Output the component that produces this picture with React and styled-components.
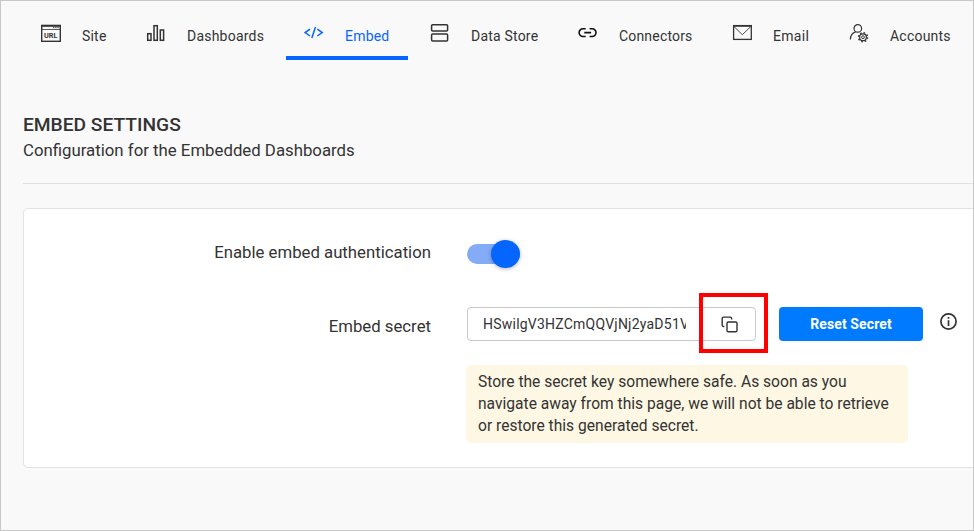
import React from "react";
import styled, { createGlobalStyle } from "styled-components";

const GlobalStyle = createGlobalStyle`
  *, *::before, *::after { box-sizing: border-box; }
  body { margin: 0; background: #f9f9f9; }
  button, input { font: inherit; }
`;

const Page = styled.div`
  height: 531px;
  overflow: hidden;
  border: 1px solid #c8c8c8;
  background: #f9f9f9;
  color: #333;
  font-family: Roboto, "Liberation Sans", sans-serif;
`;

const Nav = styled.nav`
  display: flex;
  gap: 4px;
  height: 59px;
  padding-left: 22px;
`;

const Tab = styled.a`
  display: flex;
  flex: none;
  gap: 21px;
  width: ${(p) => p.$width}px;
  padding-left: 18px;
  border-bottom: 4px solid ${(p) => (p.$active ? "#0565ff" : "transparent")};
  color: ${(p) => (p.$active ? "#0565ff" : "#333")};
  font-size: 14px;
  line-height: 16px;
  letter-spacing: ${(p) => p.$spacing}px;
  white-space: nowrap;
`;

const TabIcon = styled.svg`
  flex: none;
  width: 20px;
  height: 20px;
  margin-top: 22px;
  overflow: visible;
  fill: none;
  stroke: currentColor;
  stroke-width: 1.5;
`;

const TabLabel = styled.span`
  padding-top: 27px;
`;

const Header = styled.header`
  height: 124px;
  margin-left: 22px;
  padding-top: 53px;
  border-bottom: 1px solid #e2e2e2;
`;

const Title = styled.h1`
  margin: 0;
  font-size: 19.2px;
  font-weight: 500;
  line-height: 24px;
`;

const Subtitle = styled.p`
  margin: 1px 0 0;
  font-size: 16.8px;
  line-height: 24px;
`;

const Card = styled.section`
  height: 260px;
  margin: 24px -8px 0 22px;
  border: 1px solid #e2e2e2;
  border-radius: 5px;
  background: #fff;
`;

const Row = styled.div`
  display: flex;
  height: ${(p) => p.$height}px;
  padding-top: ${(p) => p.$top}px;
`;

const Label = styled.label`
  flex: none;
  width: 407px;
  margin-right: 36px;
  padding-top: ${(p) => p.$top}px;
  font-size: 16.75px;
  line-height: 20px;
  text-align: right;
`;

const Switch = styled.button`
  display: flex;
  align-items: center;
  justify-content: flex-end;
  width: 53px;
  height: 20px;
  margin-top: 4px;
  padding: 0;
  border: 0;
  border-radius: 10px;
  background: #84acf6;
`;

const Knob = styled.span`
  flex: none;
  width: 29px;
  height: 28px;
  border-radius: 50%;
  background: #0565ff;
  box-shadow: 0 1px 4px rgba(0, 0, 0, 0.28);
`;

const SecretField = styled.div`
  position: relative;
  display: flex;
  flex: none;
  align-items: center;
  width: 289px;
  height: 34px;
  padding-left: 15px;
  border: 1px solid #c9c9c9;
  border-radius: 4px;
`;

const SecretInput = styled.input`
  width: 203px;
  padding: 0;
  border: 0;
  outline: 0;
  background: transparent;
  color: #333;
  font-size: 14px;
  letter-spacing: 0.23px;
`;

const CopyButton = styled.button`
  display: flex;
  margin-left: 35px;
  padding: 0;
  border: 0;
  background: transparent;
  color: #333;
`;

const Highlight = styled.div`
  position: absolute;
  top: -15px;
  right: -13px;
  width: 69px;
  height: 60px;
  border: 4px solid #f00;
  pointer-events: none;
`;

const ResetButton = styled.button`
  flex: none;
  width: 144px;
  height: 34px;
  margin: 0 17px 0 23px;
  padding: 0;
  border: 0;
  border-radius: 4px;
  background: #007bff;
  color: #fff;
  font-size: 14px;
  font-weight: 700;
  letter-spacing: 0.1px;
`;

const InfoIcon = styled.svg`
  flex: none;
  width: 17px;
  height: 17px;
  margin-top: 6px;
`;

const Notice = styled.p`
  width: 442px;
  height: 78px;
  margin: 0 0 0 442px;
  padding: 6px 0 0 12px;
  border-radius: 5px;
  background: #fdf7e3;
  font-size: 15.6px;
  line-height: 22px;
  white-space: pre-line;
`;

const UrlText = styled.text`
  fill: currentColor;
  stroke: none;
  font-size: 7.3px;
  font-weight: 700;
  letter-spacing: 0;
`;

const icons = {
  site: (
    <>
      <rect x="0.7" y="2.7" width="18.6" height="15.6" strokeWidth="1.4" />
      <path d="M0 2.7h20" strokeWidth="2" />
      <path d="M1 6.5h18" strokeWidth="0.8" />
      <path d="M12 4.7h6" strokeWidth="1" strokeDasharray="1.4 0.8" />
      <UrlText x="3" y="15">URL</UrlText>
    </>
  ),
  dashboards: (
    <>
      <rect x="1.7" y="10.7" width="3.3" height="6.6" />
      <rect x="8" y="2.7" width="3.3" height="14.6" />
      <rect x="14.3" y="7" width="3.3" height="10.3" />
    </>
  ),
  embed: (
    <path d="M6 6.2L1.1 9.6 6 13M13.3 6.2l4.9 3.4-4.9 3.4M11.5 4L7.8 15.1" strokeWidth="1.5" />
  ),
  store: (
    <>
      <rect x="1.6" y="1.7" width="16" height="6.4" rx="1" />
      <rect x="1.6" y="10.9" width="16" height="7" rx="1" />
    </>
  ),
  link: (
    <path
      d="M7.7 5.7H5a3.9 3.9 0 0 0 0 7.8h2.7M11.6 5.7h2.5a3.9 3.9 0 0 1 0 7.8h-2.5M6.3 9.6h6.8"
      stroke="#111"
      strokeWidth="1.6"
    />
  ),
  email: (
    <>
      <rect x="1.6" y="2.8" width="17.7" height="13.6" strokeWidth="1.3" />
      <path d="M1 2.8h19" strokeWidth="1.7" />
      <path d="M2 3.5l8.3 8.2L18.8 3.5" strokeWidth="0.9" />
    </>
  ),
  accounts: (
    <>
      <circle cx="8.8" cy="5.4" r="3.8" strokeWidth="1.2" />
      <path d="M1.4 16.6c0-3.9 2-6.7 5.2-7.7" strokeWidth="1.2" />
      <circle cx="14" cy="14.2" r="3.4" strokeWidth="1.2" />
      <circle cx="14" cy="14.2" r="1.4" strokeWidth="1" />
      <circle cx="14" cy="14.2" r="4.5" strokeWidth="1.5" strokeDasharray="1.65 1.88" />
    </>
  ),
};

const tabs = [
  { label: "Site", icon: "site", width: 101, spacing: 0.2 },
  { label: "Dashboards", icon: "dashboards", width: 154, spacing: 0.22 },
  { label: "Embed", icon: "embed", width: 122, spacing: 0.2 },
  { label: "Data Store", icon: "store", width: 144, spacing: 0.2 },
  { label: "Connectors", icon: "link", width: 150, spacing: 0.18 },
  { label: "Email", icon: "email", width: 113, spacing: 0.3 },
  { label: "Accounts", icon: "accounts", width: 137, spacing: 0.22 },
];

export default function App() {
  return (
    <>
      <GlobalStyle />
      <Page>
        <Nav>
          {tabs.map((t) => (
            <Tab key={t.label} $width={t.width} $active={t.label === "Embed"} $spacing={t.spacing}>
              <TabIcon viewBox="0 0 20 20">{icons[t.icon]}</TabIcon>
              <TabLabel>{t.label}</TabLabel>
            </Tab>
          ))}
        </Nav>
        <Header>
          <Title>EMBED SETTINGS</Title>
          <Subtitle>Configuration for the Embedded Dashboards</Subtitle>
        </Header>
        <Card>
          <Row $height={98} $top={31}>
            <Label $top={2}>Enable embed authentication</Label>
            <Switch type="button" role="switch" aria-checked="true">
              <Knob />
            </Switch>
          </Row>
          <Row $height={58} $top={0}>
            <Label $top={9}>Embed secret</Label>
            <SecretField>
              <SecretInput readOnly value="HSwilgV3HZCmQQVjNj2yaD51V" />
              <CopyButton type="button" aria-label="Copy">
                <svg width="17" height="17" viewBox="0 0 17 17" fill="none" stroke="currentColor" strokeWidth="1.4">
                  <rect x="6" y="6" width="10" height="9.7" rx="1.3" />
                  <path d="M3.4 10.5h-.9A1.3 1.3 0 0 1 1.2 9.2V2.4a1.3 1.3 0 0 1 1.3-1.3h6.8a1.3 1.3 0 0 1 1.3 1.3v1" />
                </svg>
              </CopyButton>
              <Highlight />
            </SecretField>
            <ResetButton type="button">Reset Secret</ResetButton>
            <InfoIcon viewBox="0 0 17 17" fill="none" stroke="#333" strokeWidth="1.7">
              <circle cx="8.5" cy="8.5" r="7.6" />
              <path d="M8.5 7.2v5.8M8.5 3.9v1.8" />
            </InfoIcon>
          </Row>
          <Notice>
            {"Store the secret key somewhere safe. As soon as you\nnavigate away from this page, we will not be able to retrieve\nor restore this generated secret."}
          </Notice>
        </Card>
      </Page>
    </>
  );
}
